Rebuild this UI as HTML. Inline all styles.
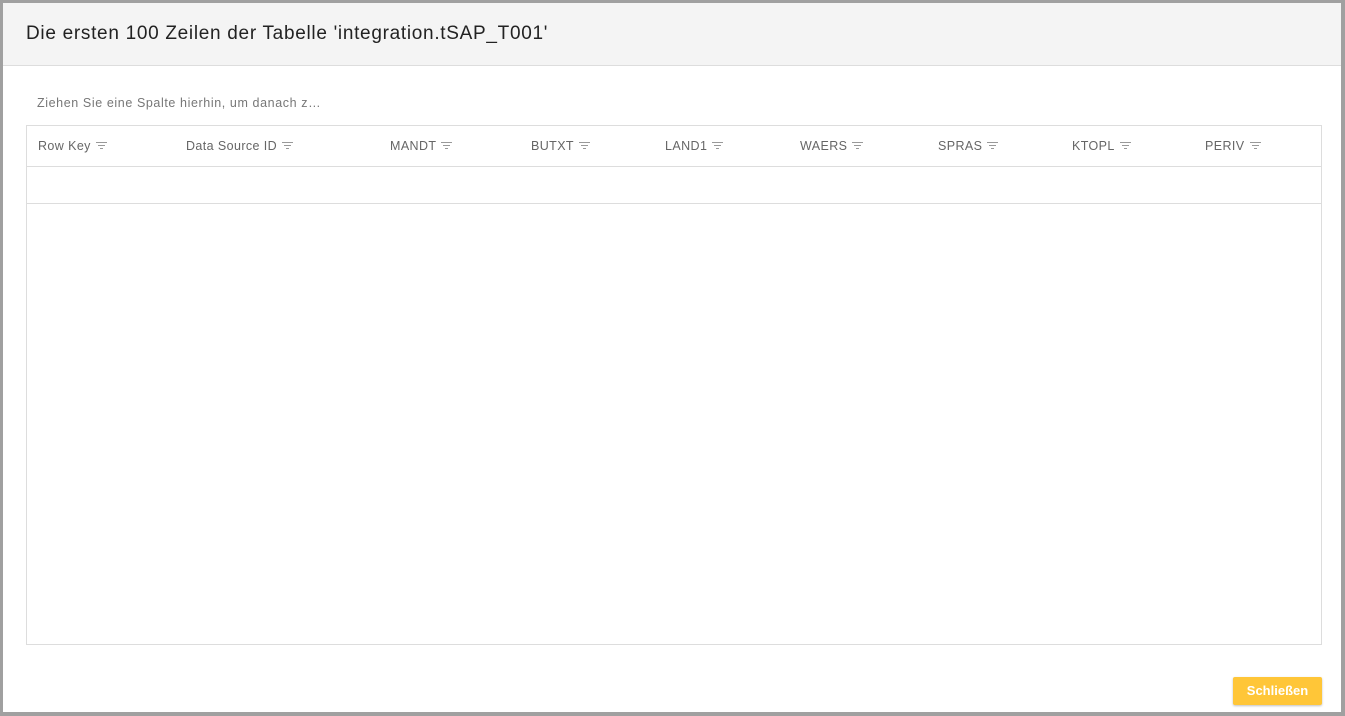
<!DOCTYPE html>
<html><head><style>
html,body{margin:0;padding:0;}
body{width:1345px;height:716px;background:#a0a0a0;position:relative;overflow:hidden;font-family:"Liberation Sans",sans-serif;}
.dlg{position:absolute;left:3px;top:3px;width:1338px;height:709px;background:#fff;}
.hd{position:absolute;left:0;top:0;width:1338px;height:62px;background:#f4f4f4;border-bottom:1px solid #ddd;}
.hd span{position:absolute;left:23px;top:20px;font-size:19px;color:#222;letter-spacing:0.7px;}
.grp{position:absolute;left:34px;top:93px;font-size:12.5px;color:#777;letter-spacing:0.6px;}
.tbl{position:absolute;left:23px;top:122px;width:1294px;height:518px;border:1px solid #ddd;}
.r1{position:absolute;left:0;top:40px;width:100%;border-top:1px solid #ddd;}
.r2{position:absolute;left:0;top:77px;width:100%;border-top:1px solid #ddd;}
.c{position:absolute;top:13px;font-size:12.5px;color:#666;letter-spacing:.4px;white-space:nowrap;}
.c svg{vertical-align:middle;margin-left:5px;margin-top:-2px;}
.btn{position:absolute;left:1230px;top:674px;width:89px;height:28px;background:#ffc638;border-radius:2px;box-shadow:0 1px 2px rgba(0,0,0,.25);color:#fff;font-size:13px;font-weight:bold;text-align:center;line-height:28px;}
</style></head><body>
<div class="dlg">
<div class="hd"><span>Die ersten 100 Zeilen der Tabelle 'integration.tSAP_T001'</span></div>
<div class="grp">Ziehen Sie eine Spalte hierhin, um danach z…</div>
<div class="tbl">
<div class="c" style="left:11px">Row Key<svg width="11" height="9"><path d="M0 1.5H11M2 4.5H9M4 7.5H7" stroke="#999" stroke-width="1"/></svg></div>
<div class="c" style="left:159px">Data Source ID<svg width="11" height="9"><path d="M0 1.5H11M2 4.5H9M4 7.5H7" stroke="#999" stroke-width="1"/></svg></div>
<div class="c" style="left:363px">MANDT<svg width="11" height="9"><path d="M0 1.5H11M2 4.5H9M4 7.5H7" stroke="#999" stroke-width="1"/></svg></div>
<div class="c" style="left:504px">BUTXT<svg width="11" height="9"><path d="M0 1.5H11M2 4.5H9M4 7.5H7" stroke="#999" stroke-width="1"/></svg></div>
<div class="c" style="left:638px">LAND1<svg width="11" height="9"><path d="M0 1.5H11M2 4.5H9M4 7.5H7" stroke="#999" stroke-width="1"/></svg></div>
<div class="c" style="left:773px">WAERS<svg width="11" height="9"><path d="M0 1.5H11M2 4.5H9M4 7.5H7" stroke="#999" stroke-width="1"/></svg></div>
<div class="c" style="left:911px">SPRAS<svg width="11" height="9"><path d="M0 1.5H11M2 4.5H9M4 7.5H7" stroke="#999" stroke-width="1"/></svg></div>
<div class="c" style="left:1045px">KTOPL<svg width="11" height="9"><path d="M0 1.5H11M2 4.5H9M4 7.5H7" stroke="#999" stroke-width="1"/></svg></div>
<div class="c" style="left:1178px">PERIV<svg width="11" height="9"><path d="M0 1.5H11M2 4.5H9M4 7.5H7" stroke="#999" stroke-width="1"/></svg></div>
<div class="r1"></div><div class="r2"></div>
</div>
<div class="btn">Schließen</div>
</div>
</body></html>
